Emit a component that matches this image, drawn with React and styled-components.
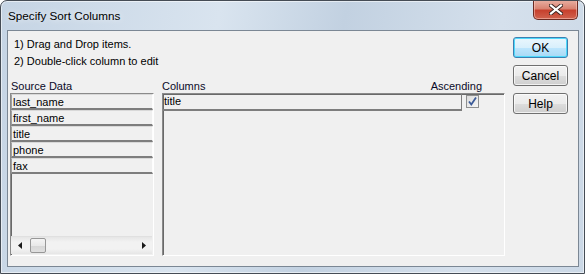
import React from 'react';
import styled, { createGlobalStyle } from 'styled-components';

const GlobalStyle = createGlobalStyle`
  html, body {
    margin: 0;
    padding: 0;
    background: #ffffff;
  }
  body {
    font-family: 'Liberation Sans', Arial, sans-serif;
    font-size: 11px;
    color: #000;
  }
`;

const Window = styled.div`
  width: 585px;
  height: 274px;
  box-sizing: border-box;
  border: 1px solid #454c55;
  border-radius: 7px 7px 0 0;
  background: linear-gradient(100deg, #c5d4e4 0%, #d9e4ef 35%, #c2d1e1 55%, #d5e0ec 80%, #cbd8e6 100%);
  display: flex;
  flex-direction: column;
  overflow: hidden;
  box-shadow: inset 0 0 0 1px rgba(255, 255, 255, 0.55);
`;

const TitleBar = styled.div`
  height: 29px;
  display: flex;
  align-items: flex-start;
  padding-left: 7px;
`;

const Title = styled.div`
  line-height: 29px;
  font-size: 11.7px;
  color: #000;
  text-shadow: 0 0 6px rgba(255, 255, 255, 0.9);
`;

const CloseButton = styled.div`
  margin-left: auto;
  margin-right: 6px;
  margin-top: -1px;
  width: 45px;
  height: 20px;
  box-sizing: border-box;
  border: 1px solid #6b2a22;
  border-top: none;
  border-radius: 0 0 5px 5px;
  background: linear-gradient(180deg, #e9b1a4 0%, #d98372 45%, #c7412e 55%, #d0624e 100%);
  box-shadow: inset 0 0 0 1px rgba(255, 210, 200, 0.5);
  display: flex;
  align-items: center;
  justify-content: center;
`;

const Client = styled.div`
  flex: 1;
  margin: 0 5px 6px 6px;
  border: 1px solid #7b8794;
  background: #f0f0f0;
  display: flex;
  padding: 5px 10px 10px 2px;
`;

const Main = styled.div`
  flex: 1;
  display: flex;
  flex-direction: column;
`;

const Instructions = styled.div`
  padding-left: 4px;
  line-height: 17px;
`;

const Panels = styled.div`
  flex: 1;
  margin-top: 9px;
  display: flex;
  gap: 8px;
`;

const Panel = styled.div`
  display: flex;
  flex-direction: column;
  width: ${p => p.$width}px;
`;

const PanelHeader = styled.div`
  height: 14px;
  line-height: 15px;
  display: flex;
  justify-content: space-between;
  padding: 0 ${p => p.$padRight || 0}px 0 ${p => p.$padLeft || 0}px;
  color: #0a0a28;
`;

const SunkenBox = styled.div`
  flex: 1;
  display: flex;
  flex-direction: column;
  border: 1px solid;
  border-color: #8a8a8a #ffffff #ffffff #8a8a8a;
  box-shadow: inset 1px 1px 0 #696969;
  background: #f0f0f0;
`;

const ListRow = styled.div`
  height: 16px;
  box-sizing: border-box;
  border-style: solid;
  border-width: 1px 1px 2px 1px;
  border-color: #d8d8d8 #fdfdfd #7d7d7d #a0a0a0;
  padding-left: 1px;
  line-height: 14px;
  color: #000;
`;

const Spacer = styled.div`
  flex: 1;
`;

const ScrollBar = styled.div`
  height: 17px;
  margin: 0 1px 1px 0;
  display: flex;
  align-items: center;
  background: linear-gradient(180deg, #e6e6e6 0%, #f2f2f2 30%, #f2f2f2 70%, #e6e6e6 100%);
  border-top: 1px solid #e0e0e0;
`;

const ArrowButton = styled.div`
  width: 17px;
  height: 17px;
  display: flex;
  align-items: center;
  justify-content: center;
`;

const Thumb = styled.div`
  width: 16px;
  height: 15px;
  margin-left: 2px;
  box-sizing: border-box;
  border: 1px solid #979797;
  border-radius: 2px;
  background: linear-gradient(180deg, #f4f4f4 0%, #e9e9e9 50%, #d6d6d6 51%, #e0e0e0 100%);
`;

const ColumnRow = styled.div`
  display: flex;
  align-items: flex-start;
`;

const EditCell = styled.div`
  width: 299px;
  height: 17px;
  box-sizing: border-box;
  border-style: solid;
  border-width: 0 1px 2px 0;
  border-color: #7d7d7d;
  padding-left: 1px;
  line-height: 15px;
  color: #000;
`;

const CheckBox = styled.div`
  width: 13px;
  height: 13px;
  margin: 1px 0 0 4px;
  box-sizing: border-box;
  border: 1px solid #8e8f8f;
  background: linear-gradient(135deg, #dcdcdc 0%, #f6f6f6 100%);
  display: flex;
  align-items: center;
  justify-content: center;
`;

const ButtonColumn = styled.div`
  margin-left: 8px;
  padding-top: 1px;
  display: flex;
  flex-direction: column;
  gap: 7px;
`;

const Button = styled.div`
  width: 55px;
  height: 21px;
  box-sizing: border-box;
  border: 1px solid ${p => (p.$default ? '#3c7fb1' : '#707070')};
  border-radius: 3px;
  background: ${p =>
    p.$default
      ? 'linear-gradient(180deg, #eaf6fd 0%, #d9f0fc 50%, #bee6fd 51%, #a7d9f5 100%)'
      : 'linear-gradient(180deg, #f2f2f2 0%, #ebebeb 50%, #dddddd 51%, #cfcfcf 100%)'};
  box-shadow: inset 0 0 0 1px ${p => (p.$default ? '#4fd9fb' : 'rgba(255,255,255,0.7)')};
  display: flex;
  align-items: center;
  justify-content: center;
  font-size: 12px;
  color: #000;
`;

const sourceFields = ['last_name', 'first_name', 'title', 'phone', 'fax'];

const App = () => {
  return (
    <>
      <GlobalStyle />
      <Window>
        <TitleBar>
          <Title>Specify Sort Columns</Title>
          <CloseButton>
            <svg width="14" height="11" viewBox="0 0 14 11">
              <path
                d="M2 1.5 L12 9.5 M12 1.5 L2 9.5"
                stroke="#3a2420"
                strokeWidth="4"
                strokeLinecap="square"
              />
              <path
                d="M2 1.5 L12 9.5 M12 1.5 L2 9.5"
                stroke="#ffffff"
                strokeWidth="2.2"
                strokeLinecap="square"
              />
            </svg>
          </CloseButton>
        </TitleBar>
        <Client>
          <Main>
            <Instructions>
              <div>1) Drag and Drop items.</div>
              <div>2) Double-click column to edit</div>
            </Instructions>
            <Panels>
              <Panel $width={144}>
                <PanelHeader $padLeft={1}>Source Data</PanelHeader>
                <SunkenBox>
                  {sourceFields.map(f => (
                    <ListRow key={f}>{f}</ListRow>
                  ))}
                  <Spacer />
                  <ScrollBar>
                    <ArrowButton>
                      <svg width="4" height="7" viewBox="0 0 4 7">
                        <path d="M4 0 L0 3.5 L4 7 Z" fill="#1a1a1a" />
                      </svg>
                    </ArrowButton>
                    <Thumb />
                    <Spacer />
                    <ArrowButton>
                      <svg width="4" height="7" viewBox="0 0 4 7">
                        <path d="M0 0 L4 3.5 L0 7 Z" fill="#1a1a1a" />
                      </svg>
                    </ArrowButton>
                  </ScrollBar>
                </SunkenBox>
              </Panel>
              <Panel $width={343}>
                <PanelHeader $padRight={23}>
                  <span>Columns</span>
                  <span>Ascending</span>
                </PanelHeader>
                <SunkenBox>
                  <ColumnRow>
                    <EditCell>title</EditCell>
                    <CheckBox>
                      <svg width="11" height="11" viewBox="0 0 11 11">
                        <path
                          d="M2 5.5 L4.3 8.5 L9 1.5"
                          fill="none"
                          stroke="#3b5a98"
                          strokeWidth="1.8"
                        />
                      </svg>
                    </CheckBox>
                  </ColumnRow>
                </SunkenBox>
              </Panel>
            </Panels>
          </Main>
          <ButtonColumn>
            <Button $default>OK</Button>
            <Button>Cancel</Button>
            <Button>Help</Button>
          </ButtonColumn>
        </Client>
      </Window>
    </>
  );
};

export default App;
